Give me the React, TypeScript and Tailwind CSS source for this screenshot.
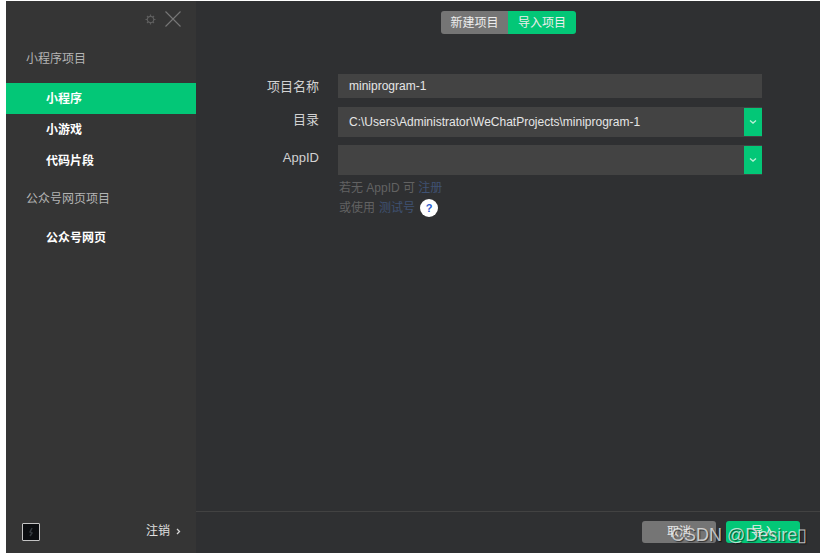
import React from "react";

const menuItemClass = "h-[31px] pl-10 flex items-center text-xs font-bold text-white";
const groupTitleClass = "pl-5 text-xs text-[#b4b4b4] leading-5";
const inputClass = "flex items-center bg-[#434343] pl-[11px] text-xs text-[#e6e6e6]";

function Arrow() {
  return (
    <div className="w-[18px] h-[28px] bg-[#03c777] flex items-center justify-center">
      <svg width="8" height="6" viewBox="0 0 8 6" fill="none" stroke="#b9f0d6" strokeWidth="1.3">
        <path d="M1 1.5l3 2.6 3-2.6" />
      </svg>
    </div>
  );
}

function Field({ label, children, className }: { label: string; children: React.ReactNode; className: string }) {
  return (
    <div className={`flex ${className}`}>
      <div className="w-[142px] pr-[19px] pt-[3px] text-right text-[13px] leading-5 text-[#d2d2d2]">{label}</div>
      <div className="w-[424px]">{children}</div>
    </div>
  );
}

export default function App() {
  return (
    <div
      className="relative h-[553px] w-[822px] overflow-hidden bg-white pt-px pl-[6px] pr-[2px] flex"
      style={{ fontFamily: '"Liberation Sans", "Noto Sans CJK SC", sans-serif' }}
    >
      {/* Sidebar */}
      <aside className="w-[190px] shrink-0 bg-[#353535] flex flex-col">
        <div className="h-[35px] flex items-center justify-end pr-[15px] gap-[9px] pt-[1px]">
          <svg width="11" height="11" viewBox="0 0 11 11" fill="none" stroke="#5e5e5e" strokeWidth="1.2">
            <circle cx="5.5" cy="5.5" r="3.2" />
            <path d="M5.5 0.5v1.6M5.5 8.9v1.6M0.5 5.5h1.6M8.9 5.5h1.6M2 2l1.1 1.1M7.9 7.9L9 9M2 9l1.1-1.1M7.9 3.1L9 2" />
          </svg>
          <svg width="16" height="16" viewBox="0 0 16 16" fill="none" stroke="#777777" strokeWidth="1.1">
            <path d="M0.5 0.5l15 15M15.5 0.5l-15 15" />
          </svg>
        </div>
        <div className={`${groupTitleClass} mt-[13px]`}>小程序项目</div>
        <div className={`${menuItemClass} mt-[14px] bg-[#03c777]`}>小程序</div>
        <div className={menuItemClass}>小游戏</div>
        <div className={menuItemClass}>代码片段</div>
        <div className={`${groupTitleClass} mt-[13px]`}>公众号网页项目</div>
        <div className={`${menuItemClass} mt-[13px]`}>公众号网页</div>
        <div className="mt-auto h-[44px] flex items-center justify-between pl-4 pr-[15px]">
          <div className="w-[18px] h-[18px] mt-[2px] bg-[#0b0d10] border border-[#c4c4c4] rounded-[1px] flex items-center justify-center">
            <svg width="6" height="10" viewBox="0 0 6 10" fill="none" stroke="#33383d" strokeWidth="1.5">
              <path d="M4 1L2 5l2 1-2 3" />
            </svg>
          </div>
          <div className="flex items-center gap-[6px] text-xs text-[#e0e0e0]">
            注销
            <svg width="5" height="7" viewBox="0 0 5 7" fill="none" stroke="#d5d5d5" strokeWidth="1.3">
              <path d="M1 1l2.5 2.5L1 6" />
            </svg>
          </div>
        </div>
      </aside>

      {/* Main panel */}
      <main className="flex-1 bg-[#2f3032] flex flex-col">
        <div className="flex justify-center pt-[10px] pl-[1px]">
          <div className="flex h-[23px] rounded-[3px] overflow-hidden text-xs text-[#eeeeee]">
            <div className="w-[67px] flex items-center justify-center bg-[#757575]">新建项目</div>
            <div className="w-[68px] flex items-center justify-center bg-[#03c777]">导入项目</div>
          </div>
        </div>

        <div className="flex-1">
          <Field label="项目名称" className="mt-[40px]">
            <div className={`${inputClass} h-[24px]`}>miniprogram-1</div>
          </Field>
          <Field label="目录" className="mt-[9px]">
            <div className={`${inputClass} h-[30px] justify-between`}>
              C:\Users\Administrator\WeChatProjects\miniprogram-1
              <Arrow />
            </div>
          </Field>
          <Field label="AppID" className="mt-[8px]">
            <div className={`${inputClass} h-[30px] justify-end`}>
              <Arrow />
            </div>
            <div className="mt-[3px] pl-px text-xs leading-[20px] text-[#626262]">
              若无 AppID 可 <span className="text-[#3f5273]">注册</span>
            </div>
            <div className="flex items-center pl-px text-xs leading-[20px] text-[#626262]">
              或使用 <span className="ml-1 text-[#3f5273]">测试号</span>
              <span className="ml-[5px] w-[18px] h-[18px] rounded-full bg-white flex items-center justify-center text-[11px] font-bold text-[#2a5bd0]">
                ?
              </span>
            </div>
          </Field>
        </div>

        <div className="h-[42px] border-t border-[#424242] flex justify-end gap-[10px] pt-[9px] pr-[20px]">
          <div className="w-[74px] h-[22px] rounded-[3px] bg-[#757575] flex items-center justify-center text-xs text-[#e8e8e8]">
            取消
          </div>
          <div className="w-[74px] h-[22px] rounded-[3px] bg-[#03c777] flex items-center justify-center text-xs text-[#eeeeee]">
            导入
          </div>
        </div>
      </main>

      {/* Watermark over the footer */}
      <div
        className="absolute left-[671px] top-[525px] text-[18px] leading-5 text-white/70 whitespace-nowrap"
        style={{ textShadow: "1px 1px 1px rgba(0,0,0,0.6)" }}
      >
        CSDN @Desire▯
      </div>
    </div>
  );
}
